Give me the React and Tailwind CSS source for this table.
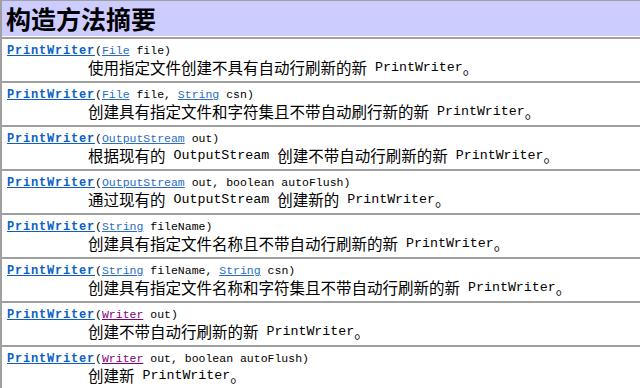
import React from "react";

const rows = [
  {
    params: [{ type: "File" }, " file"],
    desc: "使用指定文件创建不具有自动行刷新的新 PrintWriter。",
  },
  {
    params: [{ type: "File" }, " file, ", { type: "String" }, " csn"],
    desc: "创建具有指定文件和字符集且不带自动刷行新的新 PrintWriter。",
  },
  {
    params: [{ type: "OutputStream" }, " out"],
    desc: "根据现有的 OutputStream 创建不带自动行刷新的新 PrintWriter。",
  },
  {
    params: [{ type: "OutputStream" }, " out, boolean autoFlush"],
    desc: "通过现有的 OutputStream 创建新的 PrintWriter。",
  },
  {
    params: [{ type: "String" }, " fileName"],
    desc: "创建具有指定文件名称且不带自动行刷新的新 PrintWriter。",
  },
  {
    params: [{ type: "String" }, " fileName, ", { type: "String" }, " csn"],
    desc: "创建具有指定文件名称和字符集且不带自动行刷新的新 PrintWriter。",
  },
  {
    params: [{ type: "Writer", visited: true }, " out"],
    desc: "创建不带自动行刷新的新 PrintWriter。",
  },
  {
    params: [{ type: "Writer", visited: true }, " out, boolean autoFlush"],
    desc: "创建新 PrintWriter。",
  },
];

// latin runs in the description are drawn in mono, CJK in the CJK font
const Desc = ({ text }) => {
  const parts = text.split(/([ A-Za-z]+)/).filter(Boolean);
  return (
    <div className="h-[18px] pl-[81px] flex items-center whitespace-pre text-black">
      {parts.map((p, i) =>
        /[A-Za-z ]/.test(p[0]) ? (
          <span key={i} className="font-['Liberation_Mono',monospace] text-[13.3px]">
            {p}
          </span>
        ) : (
          <span key={i} className="font-['Noto_Sans_CJK_SC',sans-serif] text-[15.5px]">
            {p}
          </span>
        ),
      )}
    </div>
  );
};

const Row = ({ row }) => (
  <div className="h-[44px] border-t-2 border-[#a0a0a0] pl-[5px] pt-[4px]">
    <div className="h-[16px] flex items-center whitespace-pre font-['Liberation_Mono',monospace] text-[11.5px] text-black">
      <a className="font-bold text-[12px] tracking-[0.8px] text-[#0a5fc6] underline">PrintWriter</a>
      <span>(</span>
      {row.params.map((p, i) =>
        typeof p === "string" ? (
          <span key={i}>{p}</span>
        ) : (
          <a
            key={i}
            className={
              p.visited
                ? "text-[#800080] underline"
                : "text-[#2a6cc4] underline"
            }
          >
            {p.type}
          </a>
        ),
      )}
      <span>)</span>
    </div>
    <Desc text={row.desc} />
  </div>
);

export default function App() {
  return (
    <div className="w-[640px] h-[388px] overflow-hidden bg-white">
      <div className="border-l-2 border-[#a0a0a0]">
        <div className="h-[36px] border-t border-[#a0a0a0] bg-[#ccccff] pl-[4px] flex items-center">
          <span className="font-['Noto_Sans_CJK_SC',sans-serif] font-bold text-[25px] leading-none text-black">
            构造方法摘要
          </span>
        </div>
        <div className="h-px bg-white" />
        {rows.map((r, i) => (
          <Row key={i} row={r} />
        ))}
      </div>
    </div>
  );
}
